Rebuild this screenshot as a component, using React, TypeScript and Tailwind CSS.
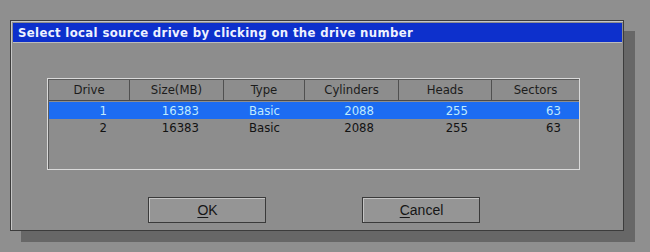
const columns = [
  { name: 'Drive', width: 'w-[81px]', pad: 'pr-[23px]' },
  { name: 'Size(MB)', width: 'w-[94px]', pad: 'pr-[25px]' },
  { name: 'Type', width: 'w-[81px]', pad: 'pr-[25px]' },
  { name: 'Cylinders', width: 'w-[94px]', pad: 'pr-[25px]' },
  { name: 'Heads', width: 'w-[93px]', pad: 'pr-[24px]' },
  { name: 'Sectors', width: 'flex-1', pad: 'pr-[18px]' },
];

const drives = [
  ['1', '16383', 'Basic', '2088', '255', '63'],
  ['2', '16383', 'Basic', '2088', '255', '63'],
];

function Button({ label }: { label: string }) {
  return (
    <button className="w-[118px] h-[26px] border border-[#3a3a3a] bg-[#959595] p-0">
      <span className="flex h-full w-full items-center justify-center border-t border-l border-[#c4c4c4] font-['Liberation_Sans',sans-serif] text-[14px] text-[#161616]">
        <span className="underline underline-offset-2">{label[0]}</span>
        {label.slice(1)}
      </span>
    </button>
  );
}

export default function App() {
  return (
    <div className="w-[650px] h-[252px] bg-[#8f8f8f] pt-[20px] pl-[10px] overflow-hidden">
      <div className="w-[614px] h-[211px] border border-[#3c3c3c] bg-[#8d8d8d] shadow-[11px_11px_0_#676767]">
        <div className="h-full border-t border-l border-[#c6c6c6] p-px">
          <div className="h-[20px] bg-[#0d30cc] border-b border-[#bdbdbd] pl-[5px] flex items-center font-['DejaVu_Sans_Condensed',sans-serif] font-bold text-[13px] text-[#eef2ff] tracking-[0.35px]">
            Select local source drive by clicking on the drive number
          </div>

          <div className="ml-[34px] mt-[35px] w-[533px] h-[92px] border border-[#dadada]">
            <div className="h-full border-t border-l border-[#5c5c5c] font-['DejaVu_Sans_Condensed',sans-serif] text-[13px]">
              <div className="flex h-[21px] border-b border-[#4a4a4a] text-[#1c1c1c]">
                {columns.map((c, i) => (
                  <div
                    key={c.name}
                    className={`${c.width} flex items-center justify-center ${i < columns.length - 1 ? 'border-r border-[#505050]' : ''}`}
                  >
                    {c.name}
                  </div>
                ))}
              </div>
              <div className="mt-px">
                {drives.map((row, r) => (
                  <div
                    key={r}
                    className={`flex h-[17px] items-center ${r === 0 ? 'bg-[#1c6cf2] text-[#bfeaff]' : 'text-[#121212]'}`}
                  >
                    {row.map((v, i) => (
                      <div key={i} className={`${columns[i].width} text-right ${columns[i].pad}`}>
                        {v}
                      </div>
                    ))}
                  </div>
                ))}
              </div>
            </div>
          </div>

          <div className="flex mt-[27px] ml-[135px] gap-[96px]">
            <Button label="OK" />
            <Button label="Cancel" />
          </div>
        </div>
      </div>
    </div>
  );
}
